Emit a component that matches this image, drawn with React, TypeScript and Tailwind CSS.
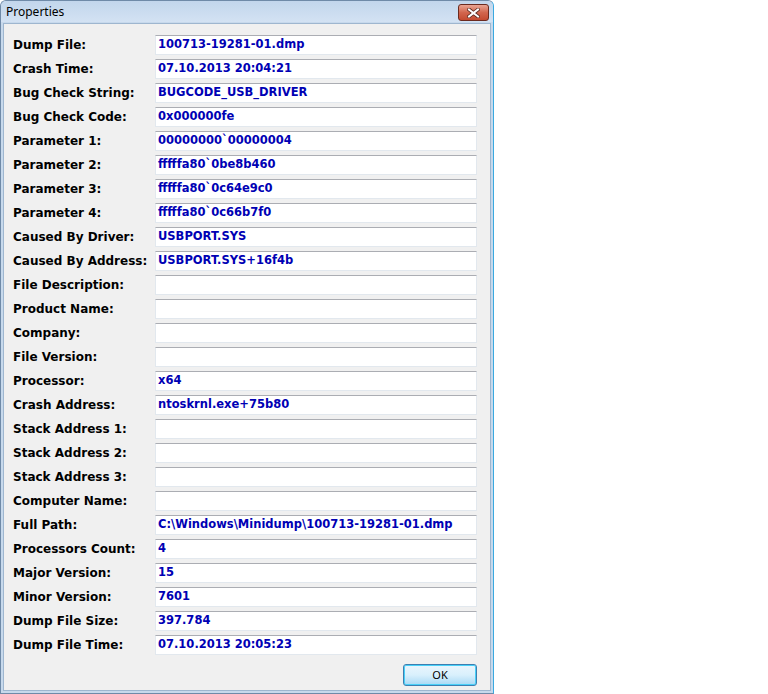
import React from "react";

const rows: [string, string][] = [
  ["Dump File:", "100713-19281-01.dmp"],
  ["Crash Time:", "07.10.2013 20:04:21"],
  ["Bug Check String:", "BUGCODE_USB_DRIVER"],
  ["Bug Check Code:", "0x000000fe"],
  ["Parameter 1:", "00000000`00000004"],
  ["Parameter 2:", "fffffa80`0be8b460"],
  ["Parameter 3:", "fffffa80`0c64e9c0"],
  ["Parameter 4:", "fffffa80`0c66b7f0"],
  ["Caused By Driver:", "USBPORT.SYS"],
  ["Caused By Address:", "USBPORT.SYS+16f4b"],
  ["File Description:", ""],
  ["Product Name:", ""],
  ["Company:", ""],
  ["File Version:", ""],
  ["Processor:", "x64"],
  ["Crash Address:", "ntoskrnl.exe+75b80"],
  ["Stack Address 1:", ""],
  ["Stack Address 2:", ""],
  ["Stack Address 3:", ""],
  ["Computer Name:", ""],
  ["Full Path:", "C:\\Windows\\Minidump\\100713-19281-01.dmp"],
  ["Processors Count:", "4"],
  ["Major Version:", "15"],
  ["Minor Version:", "7601"],
  ["Dump File Size:", "397.784"],
  ["Dump File Time:", "07.10.2013 20:05:23"],
];

export default function App() {
  return (
    <div className="w-[768px] h-[694px] bg-white flex">
      <div className="w-[494px] h-[694px] flex flex-col bg-[#c7d9ec] border border-[#6f8aa8] border-r-[#3aa9e0] rounded-t-[6px] overflow-hidden">
        {/* title bar */}
        <div className="h-[21px] flex items-center justify-between bg-gradient-to-b from-[#c2d6ec] to-[#d3e2f3] pl-[5px] pr-[4px]">
          <span className="text-[12px] text-black leading-none pt-[1px]" style={{ fontFamily: '"Noto Sans", "Open Sans", sans-serif' }}>
            Properties
          </span>
          <div className="w-[31px] h-[17px] mt-[2px] rounded-[3px] border border-[#6b2a1f] bg-gradient-to-b from-[#e8a493] via-[#d2664e] to-[#c44a30] flex items-center justify-center">
            <svg width="13" height="10" viewBox="0 0 13 10">
              <path d="M2 1.5 L11 8.5 M11 1.5 L2 8.5" stroke="#5a2a20" strokeWidth="3.6" strokeLinecap="square" />
              <path d="M2 1.5 L11 8.5 M11 1.5 L2 8.5" stroke="#ffffff" strokeWidth="2" strokeLinecap="square" />
            </svg>
          </div>
        </div>
        {/* client */}
        <div className="flex-1 mx-[2px] mb-[2px] mt-[1px] bg-[#f0f0f0] border border-[#9eb6cf] flex flex-col pl-[9px] pt-[11px]" style={{ fontFamily: '"DejaVu Sans", Verdana, sans-serif' }}>
          <div className="flex flex-col gap-[4px]">
            {rows.map(([label, value]) => (
              <div key={label} className="flex items-center h-[20px]">
                <div className="w-[142px] text-[12px] font-bold text-black leading-none">{label}</div>
                <div className="w-[322px] h-[20px] bg-white border border-[#e2e8ee] border-t-[#abadb3] flex items-center pl-[2px] text-[11.5px] font-bold text-[#0000b4] leading-none">
                  {value}
                </div>
              </div>
            ))}
          </div>
          <div className="w-[464px] flex justify-end mt-[9px]">
            <div className="w-[74px] h-[22px] rounded-[3px] border border-[#3c7fb1] shadow-[inset_0_0_0_1px_#48d0f8] bg-gradient-to-b from-[#eaf6fd] via-[#d9f0fc] to-[#a7d9f5] flex items-center justify-center text-[11px] text-black" style={{ fontFamily: '"Noto Sans", sans-serif' }}>
              OK
            </div>
          </div>
        </div>
      </div>
    </div>
  );
}
